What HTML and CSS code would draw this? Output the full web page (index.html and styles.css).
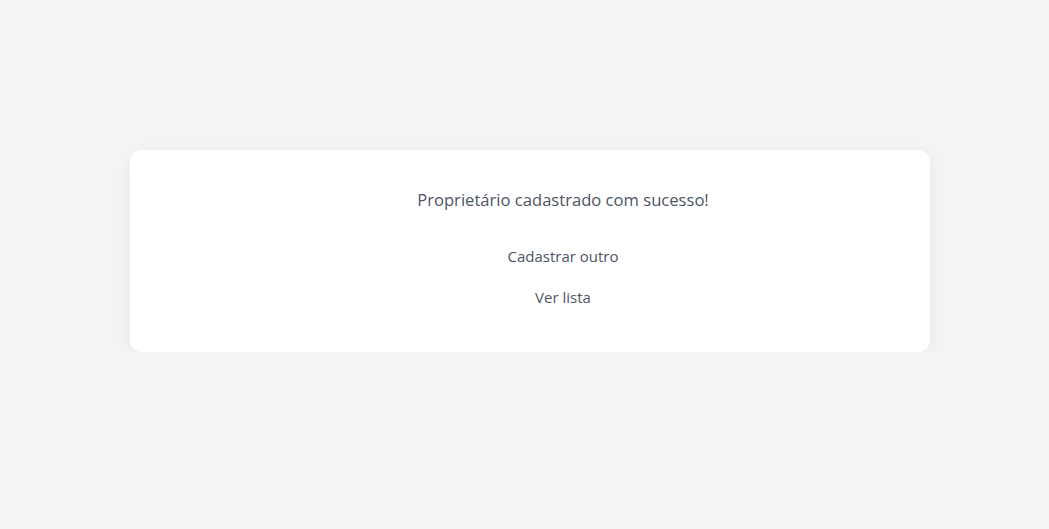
FILE: index.html
```html
<!DOCTYPE html>
<html lang="pt">
<head>
<meta charset="utf-8">
<link rel="stylesheet" href="styles.css">
</head>
<body>
<div class="page">
  <div class="card">
    <p class="title">Proprietário cadastrado com sucesso!</p>
    <div class="actions">
      <a class="btn" href="#">Cadastrar outro</a>
      <a class="btn" href="#">Ver lista</a>
    </div>
  </div>
</div>
</body>
</html>
```

FILE: styles.css
```css
html, body {
  margin: 0;
  background: #f3f4f6;
  font-family: "Open Sans", "Noto Sans", sans-serif;
  color: #4b5563;
}
.page {
  padding: 150px 119px 0 130px;
}
.card {
  width: 800px;
  box-sizing: border-box;
  background: #fff;
  border-radius: 12px;
  box-shadow: 0 4px 20px rgba(17, 24, 39, 0.05);
  padding: 36px 24px 35px 90px;
  display: flex;
  flex-direction: column;
  align-items: center;
}
.title {
  margin: 0;
  font-size: 16.6px;
  line-height: 28px;
  color: #4b5563;
}
.actions {
  margin-top: 22px;
  display: flex;
  flex-direction: column;
  align-items: center;
  gap: 1px;
}
.btn {
  display: block;
  padding: 8px 12px;
  font-size: 15px;
  line-height: 24px;
  color: #4b5563;
  text-decoration: none;
}
```
